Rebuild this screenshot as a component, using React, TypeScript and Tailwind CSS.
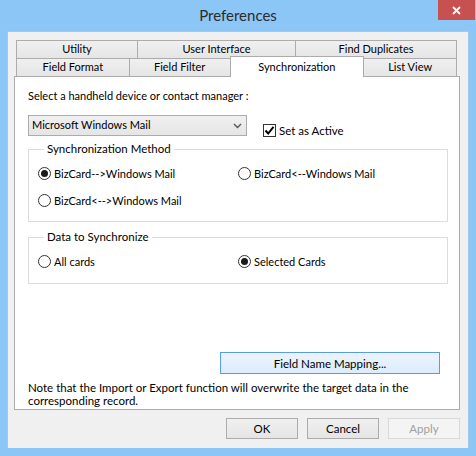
import React from "react";

const font = { fontFamily: 'Lato, "Liberation Sans", sans-serif' };

const Tab = ({ label, className }: { label: string; className?: string }) => (
  <div
    className={`h-[18px] flex items-center justify-center border border-[#acacac] border-b-0 bg-gradient-to-b from-[#f0f0f0] to-[#e5e5e5] text-[11px] text-black -ml-px first:ml-0 ${className ?? ""}`}
  >
    {label}
  </div>
);

const Radio = ({ checked, label, className }: { checked?: boolean; label: string; className?: string }) => (
  <div className={`flex items-center ${className ?? ""}`}>
    <div className="w-[13px] h-[13px] rounded-full border border-[#333] bg-white flex items-center justify-center">
      {checked && <div className="w-[7px] h-[7px] rounded-full bg-[#1a1a1a]" />}
    </div>
    <span className="ml-[3px] text-[11px] leading-none">{label}</span>
  </div>
);

const Button = ({ label, disabled }: { label: string; disabled?: boolean }) => (
  <div
    className={`w-[72px] h-[21px] flex items-center justify-center border text-[11.5px] ${
      disabled
        ? "border-[#d9d9d9] bg-[#f4f4f4] text-[#a0a0a0]"
        : "border-[#acacac] bg-gradient-to-b from-[#f0f0f0] to-[#e5e5e5] text-black"
    }`}
  >
    {label}
  </div>
);

export default function App() {
  return (
    <div className="w-[476px] h-[456px] bg-[#8bc6f7] flex flex-col text-black" style={font}>
      {/* title bar */}
      <div className="h-[31px] flex items-start">
        <div className="flex-1 flex justify-center pl-[38px] pt-[6px]">
          <span className="text-[15px] leading-[18px] text-[#2b2b2b]">Preferences</span>
        </div>
        <div className="relative z-50 shrink-0 w-[37px] h-[20px] mr-[1px] bg-[#c75050] flex items-center justify-center">
          <svg width="9" height="9" viewBox="0 0 9 9">
            <path d="M1 1 L8 8 M8 1 L1 8" stroke="white" strokeWidth="1.8" />
          </svg>
        </div>
      </div>

      {/* client */}
      <div className="mx-[7px] h-[417px] bg-[#f0f0f0] border-l border-r border-t border-[#a6c8e8] pl-[6px] pt-[8px]">
        {/* tabs */}
        <div className="ml-[2px] w-[441px]">
          <div className="flex">
            <Tab label="Utility" className="w-[122px]" />
            <Tab label="User Interface" className="w-[159px]" />
            <Tab label="Find Duplicates" className="w-[162px]" />
          </div>
          <div className="flex h-[18px] items-end">
            <Tab label="Field Format" className="w-[114px]" />
            <Tab label="Field Filter" className="w-[102px]" />
            <div className="relative z-10 w-[135px] h-[21px] -ml-px -mb-px flex items-start justify-center pt-[2px] bg-white border border-[#acacac] border-b-0 text-[11px]">
              Synchronization
            </div>
            <Tab label="List View" className="w-[94px]" />
          </div>
        </div>

        {/* panel */}
        <div className="w-[446px] h-[334px] bg-white border border-[#acacac] px-[13px] pt-[11px] text-[11px]">
          <div className="leading-[16px]">Select a handheld device or contact manager :</div>

          <div className="flex items-start mt-[11px]">
            <div className="w-[219px] h-[21px] border border-[#acacac] bg-gradient-to-b from-[#f0f0f0] to-[#e5e5e5] flex items-center justify-between pl-[3px] pr-[4px]">
              <span>Microsoft Windows Mail</span>
              <svg width="9" height="6" viewBox="0 0 9 6">
                <path d="M1 1 L4.5 4.5 L8 1" stroke="#555" strokeWidth="1.4" fill="none" />
              </svg>
            </div>
            <div className="flex items-center ml-[16px] mt-[7px]">
              <div className="w-[13px] h-[13px] border border-[#333] bg-white flex items-center justify-center">
                <svg width="11" height="11" viewBox="0 0 11 11">
                  <path d="M1.5 5.5 L4.2 8.5 L9.5 1.8" stroke="#000" strokeWidth="2" fill="none" />
                </svg>
              </div>
              <span className="ml-[3px] text-[11.5px]">Set as Active</span>
            </div>
          </div>

          <fieldset className="w-[420px] h-[80px] border border-[#dcdcdc] mt-[3px] px-[9px]">
            <legend className="ml-[6px] px-[3px] leading-[14px] text-[11.5px]">Synchronization Method</legend>
            <div className="flex mt-[11px]">
              <Radio checked label="BizCard-->Windows Mail" className="w-[200px]" />
              <Radio label="BizCard<--Windows Mail" />
            </div>
            <Radio label="BizCard<-->Windows Mail" className="mt-[14px]" />
          </fieldset>

          <fieldset className="w-[420px] h-[54px] border border-[#dcdcdc] mt-[8px] px-[9px]">
            <legend className="ml-[6px] px-[3px] leading-[14px] text-[11.5px]">Data to Synchronize</legend>
            <div className="flex mt-[11px]">
              <Radio label="All cards" className="w-[200px]" />
              <Radio checked label="Selected Cards" />
            </div>
          </fieldset>

          <div className="flex justify-end mt-[68px] pr-[6px]">
            <div className="w-[220px] h-[22px] border border-[#569de5] bg-gradient-to-b from-[#ecf4fc] to-[#dcecfc] flex items-center justify-center text-[11.5px]">
              Field Name Mapping...
            </div>
          </div>

          <div className="mt-[7px] leading-[13px] text-[11.5px]">
            Note that the Import or Export function will overwrite the target data in the
            <br />
            corresponding record.
          </div>
        </div>

        {/* buttons */}
        <div className="flex justify-end gap-[9px] w-[446px] mt-[8px]">
          <Button label="OK" />
          <Button label="Cancel" />
          <Button label="Apply" disabled />
        </div>
      </div>
    </div>
  );
}
